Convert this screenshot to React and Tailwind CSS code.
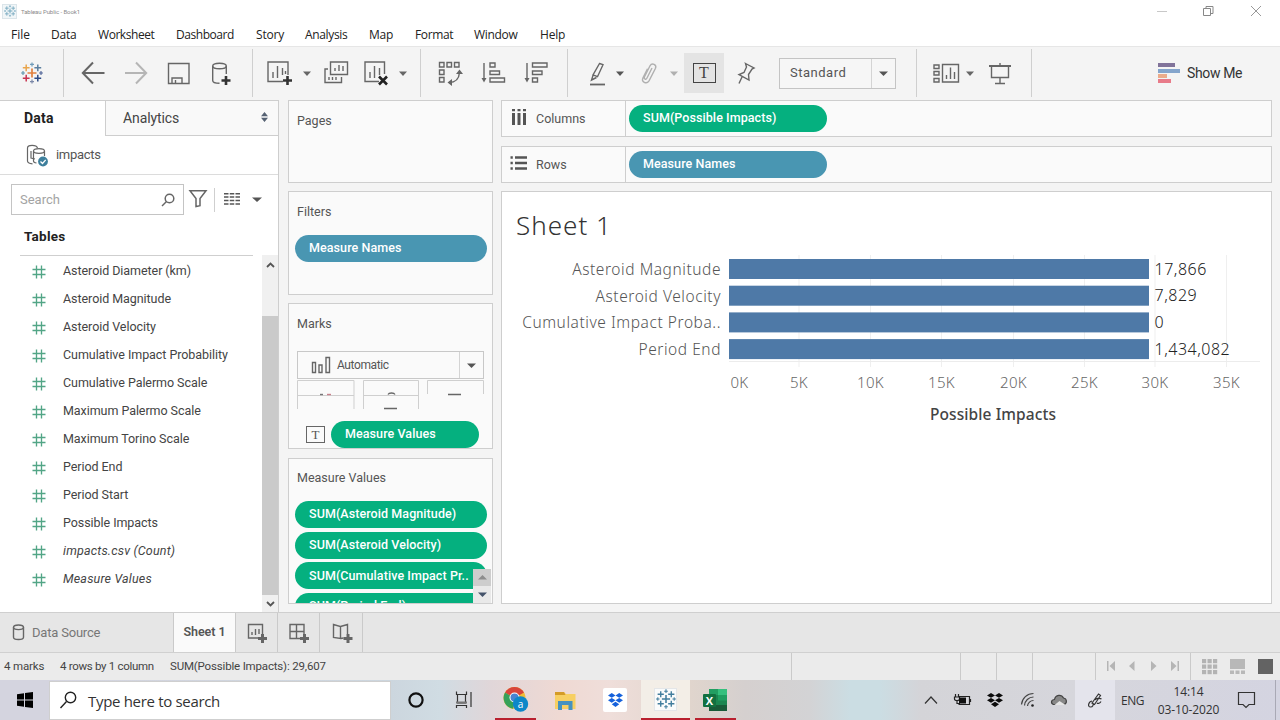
import React from "react";

/* Icon whose drawing coordinates start at (x, y). */
function Ico({ x, y, w, h, className = "", children, stroke = "#666", sw = 1.4 }) {
  return (
    <svg
      className={"block shrink-0 " + className}
      width={w}
      height={h}
      viewBox={`${x} ${y} ${w} ${h}`}
      fill="none"
      stroke={stroke}
      strokeWidth={sw}
    >
      {children}
    </svg>
  );
}

function Caret({ className = "", color = "#666", w = 8 }) {
  return (
    <svg className={"block shrink-0 " + className} width={w} height="5" viewBox="0 0 8 5" preserveAspectRatio="none">
      <path d="M0 .5h8L4 5z" fill={color} />
    </svg>
  );
}

function Plus({ x, y, s = 4.5, color = "#333", w = 2.6 }) {
  return <path d={`M${x - s} ${y}h${2 * s}M${x} ${y - s}v${2 * s}`} stroke={color} strokeWidth={w} />;
}

const CROSSES = [
  [0, 0, 4.5, "#e0803f", 1.7],
  [-5.8, -5.2, 3.4, "#e9a54c", 1.5],
  [5.8, -5.2, 3.4, "#5b7f9f", 1.5],
  [-5.8, 5.2, 3.4, "#c8334f", 1.5],
  [5.8, 5.2, 3.4, "#2a4a86", 1.5],
  [0, -8.6, 2, "#6f9cba", 1.2],
  [0, 8.6, 2, "#7b88a8", 1.2],
  [-9, 0, 1.9, "#5a93ab", 1.1],
  [9, 0, 1.9, "#4a5f95", 1.1],
];

function TableauMark({ size, color, className = "" }) {
  return (
    <svg className={"block shrink-0 " + className} width={size} height={size} viewBox="-11 -11 22 22">
      {CROSSES.map(([x, y, s, c, w], i) => (
        <path key={i} d={`M${x - s} ${y}h${2 * s}M${x} ${y - s}v${2 * s}`} stroke={color || c} strokeWidth={w} />
      ))}
    </svg>
  );
}

function Dropbox({ className = "", color, w, h }) {
  return (
    <svg className={"block shrink-0 " + className} width={w} height={h} viewBox="0 0 16 15" preserveAspectRatio="none" fill={color}>
      <path d="M4 0l4 2.6L4 5.2 0 2.6zM12 0l4 2.6-4 2.6-4-2.6zM4 5.3l4 2.6-4 2.6-4-2.6zM12 5.3l4 2.6-4 2.6-4-2.6zM8 9.3l4 2.7L8 15l-4-3z" />
    </svg>
  );
}

const Sep = () => <div className="h-[48px] w-px shrink-0 bg-[#cfcfcf]" />;

function Header() {
  return (
    <>
      <div className="flex h-[22px] items-center bg-white">
        <div className="ml-[2px] flex h-[15px] w-[15px] items-center justify-center border border-[#dbe5ea] bg-[#f1f6f8]">
          <TableauMark size={12} color="#6fa5bd" />
        </div>
        <span className="ml-[4px] pt-[2px] text-[6px] leading-none tracking-[-0.08px] text-[#8b8b8b]">Tableau Public - Book1</span>
        <Ico x={1156} y={4} w={12} h={14} className="ml-auto" stroke="#c8c8c8" sw={1}>
          <path d="M1157 11.5h10" />
        </Ico>
        <Ico x={1202} y={4} w={13} h={14} className="ml-[34px]" stroke="#888" sw={1}>
          <path d="M1203.5 8.5h7v7h-7zM1206 8V6.500h7v7h-2" />
        </Ico>
        <Ico x={1250} y={4} w={12} h={14} className="mr-[18px] ml-[35px]" stroke="#999" sw={1}>
          <path d="M1251 6l10 10M1261 6l-10 10" />
        </Ico>
      </div>
      <div className="flex h-[24px] items-center bg-white pt-[2px] pl-[11px] font-['Open_Sans','Noto_Sans',sans-serif] text-[12px] leading-none text-[#222]">
        <span className="w-[40px]">File</span>
        <span className="w-[47px] tracking-[-0.2px]">Data</span>
        <span className="w-[78px] tracking-[-0.45px]">Worksheet</span>
        <span className="w-[80px] tracking-[-0.45px]">Dashboard</span>
        <span className="w-[49px] tracking-[-0.2px]">Story</span>
        <span className="w-[64px] tracking-[-0.35px]">Analysis</span>
        <span className="w-[46px] tracking-[-0.2px]">Map</span>
        <span className="w-[59px] tracking-[-0.35px]">Format</span>
        <span className="w-[66px] tracking-[-0.3px]">Window</span>
        <span className="tracking-[-0.2px]">Help</span>
      </div>
    </>
  );
}

function Toolbar() {
  return (
    <div className="flex h-[54px] items-center border-t border-[#e6e6e6] bg-[#f4f4f4] pb-[1px]">
      <div className="flex w-[63px] shrink-0 justify-center pl-[1px]">
        <TableauMark size={22} />
      </div>
      <Sep />
      <div className="flex w-[188px] shrink-0 items-center">
        <Ico x={81} y={61.5} w={24} h={24} className="ml-[17px]" sw={2}>
          <path d="M104.500 73.500H83M93 63L82.800 73.500 93 84" />
        </Ico>
        <Ico x={124} y={61.5} w={24} h={24} className="ml-[19px]" stroke="#b5b5b5" sw={2}>
          <path d="M125 73.500h21.500M136 63l10.200 10.500L136 84" />
        </Ico>
        <Ico x={167} y={61} w={24} h={24} className="ml-[19px]">
          <path d="M168.500 63.500h20.500v20h-20.500zM172 83v-5h10v5M175.500 80v3" />
        </Ico>
        <Ico x={209} y={59} w={24} h={28} className="ml-[18px]">
          <ellipse cx="219.500" cy="66" rx="6.800" ry="2.800" />
          <path d="M212.700 66v14.500c0 1.800 3 2.800 6.800 2.800M226.300 66v8" />
          <Plus x={226} y={80.500} />
        </Ico>
      </div>
      <Sep />
      <div className="flex w-[167px] shrink-0 items-center">
        <Ico x={265} y={59} w={28} h={28} className="ml-[12px]">
          <path d="M288 75V62h-20v19.500h15M273 78v-6M277.500 78V66M282.500 75v-7M285.500 74v-3" />
          <Plus x={287.500} y={80.500} />
        </Ico>
        <Caret className="ml-[10px]" />
        <Ico x={323} y={59} w={26} h={28} className="ml-[12px]">
          <path d="M330.500 62h17v12.500h-17zM335 71v-3M339 71v-6M343 71v-5M328 69h-3v13.500h16.500V77M329 80v-3M332.500 80v-3M336 80v-3" />
        </Ico>
        <Ico x={362} y={59} w={28} h={28} className="ml-[13px]">
          <path d="M384.500 74V62h-19.500v19.500h14M370 78v-6M374.500 78V66M379.500 75v-7" />
          <path d="M379 76.500l8 8M387 76.500l-8 8" stroke="#222" strokeWidth="2.600" />
        </Ico>
        <Caret className="ml-[9px]" />
      </div>
      <Sep />
      <div className="flex w-[146px] shrink-0 items-center">
        <Ico x={437} y={60} w={27} h={27} className="ml-[16px]">
          <path d="M439.500 62.500h4.500v4.500h-4.500zM447 62.500h4.500v4.500H447zM454.500 62.500h4.500v4.500h-4.500zM439.500 70h4.500v4.500h-4.500zM439.500 77.500h4.500v4.500h-4.500zM449 82.500c6 0 10-3.500 10.500-10" />
          <path d="M452 79v7l-4.500-3.500zM456 74h7l-3.500-4.500z" fill="#666" stroke="none" />
        </Ico>
        <Ico x={481} y={60} w={26} h={27} className="ml-[17px]">
          <path d="M484 63v16M490 63h5v4h-5zM490 71h9.500v3.500H490zM490 78h14.500v4H490z" />
          <path d="M481.500 78h5l-2.500 4.500z" fill="#666" stroke="none" />
        </Ico>
        <Ico x={524} y={60} w={26} h={27} className="ml-[17px]">
          <path d="M527 63v16M532.500 63h14.500v4h-14.500zM532.500 71h9.500v3.500h-9.500zM532.500 78h5v4h-5z" />
          <path d="M524.500 78h5l-2.500 4.500z" fill="#666" stroke="none" />
        </Ico>
      </div>
      <Sep />
      <div className="flex w-[348px] shrink-0 items-center">
        <Ico x={588} y={60} w={20} h={27} className="ml-[20px]">
          <path d="M599.500 63.500l3.500 1.200-5.500 12-4.500-1.700zM593 75.500l-1.500 4.500 5-2.500" />
          <path d="M590 84.500h15" strokeWidth="1.800" />
        </Ico>
        <Caret className="ml-[8px]" color="#555" />
        <Ico x={638} y={60} w={22} h={27} className="ml-[14px]" stroke="#b0b0b0">
          <path d="M652 68l-5 10c-1 2.200-3.500 1-2.500-1.200l5.500-11c2-3.500 7-1.300 5.500 2.500l-6.500 12.500c-2.500 4-8 1.200-6-3l4.500-9" />
        </Ico>
        <Caret className="ml-[10px]" color="#b0b0b0" />
        <div className="ml-[6px] flex h-[40px] w-[40px] shrink-0 items-center justify-center bg-[#e4e4e4]">
          <div className="flex h-[20px] w-[23px] items-center justify-center border-[1.500px] border-[#444] font-['Liberation_Serif',serif] text-[16px] leading-none text-[#444]">
            T
          </div>
        </div>
        <Ico x={736} y={60} w={20} h={27} className="ml-[12px]">
          <path d="M745.500 63.500l8.500 4.500-2 1-3.500 5.500.5 5.500-10-5.500 5-2 2.500-5.500zM742 77l-3 6.500" />
        </Ico>
        <div className="ml-[23px] flex h-[31px] w-[117px] items-center border border-[#c4c4c4] bg-[#f6f6f6]">
          <span className="w-[91px] pl-[10px] text-[13px] tracking-[0.5px] text-[#555]">Standard</span>
          <span className="flex h-full flex-1 items-center justify-center border-l border-[#d4d4d4]">
            <Caret w={9} color="#555" />
          </span>
        </div>
      </div>
      <Sep />
      <div className="flex w-[114px] shrink-0 items-center">
        <Ico x={932} y={60} w={28} h={27} className="ml-[15px]">
          <path d="M934 65h5v3.500h-5zM934 71.500h5V75h-5zM934 78.500h5V82h-5zM942.500 64.500h16v17.500h-16zM946.500 79v-4M950.500 79V67.500M954.500 79v-7" />
        </Ico>
        <Caret className="ml-[6px]" />
        <Ico x={988} y={60} w={24} h={27} className="ml-[14px]">
          <path d="M989 66h22" strokeWidth="2" />
          <path d="M991.500 66v11.500h17V66M1000 77.500V83M995 83.500h10M1000 63v3" />
        </Ico>
      </div>
      <Sep />
      <Ico x={1158} y={62} w={23} h={22} className="ml-[126px]" stroke="none">
        <path d="M1158 63h17v4h-17z" fill="#81739a" />
        <path d="M1158 69h22v4h-22z" fill="#85a5cc" />
        <path d="M1158 74h9v4h-9z" fill="#ecac8b" />
        <path d="M1158 79h13v4h-13z" fill="#e87b89" />
      </Ico>
      <span className="ml-[6px] text-[14px] tracking-[-0.35px] whitespace-nowrap text-[#333]">Show Me</span>
    </div>
  );
}

const FIELDS = [
  "Asteroid Diameter (km)",
  "Asteroid Magnitude",
  "Asteroid Velocity",
  "Cumulative Impact Probability",
  "Cumulative Palermo Scale",
  "Maximum Palermo Scale",
  "Maximum Torino Scale",
  "Period End",
  "Period Start",
  "Possible Impacts",
  "impacts.csv (Count)",
  "Measure Values",
];

function DataPane() {
  return (
    <div className="flex w-[279px] shrink-0 flex-col border-t border-r border-[#cecece] bg-white">
      <div className="flex h-[35px] shrink-0">
        <div className="w-[105px] pt-[7px] pl-[24px] text-[14px] leading-[20px] font-bold tracking-[0.2px] text-[#222]">Data</div>
        <div className="flex flex-1 justify-between border-b border-l border-[#cecece] bg-[#f9f9f9] pr-[9px] pl-[17px]">
          <span className="pt-[7px] text-[14px] leading-[20px] tracking-[-0.1px] text-[#444]">Analytics</span>
          <Ico x={0} y={0} w={9} h={10} className="mt-[11px]" stroke="none">
            <path d="M1 4.200L4.500 0 8 4.200zM1 5.800L4.500 10 8 5.800z" fill="#566273" />
          </Ico>
        </div>
      </div>
      <div className="flex h-[39px] shrink-0 items-center border-b border-[#dcdcdc] pl-[26px]">
        <Ico x={26} y={143} w={23} h={23} sw={1.200}>
          <path d="M27.500 147v13c0 1.500 2 2.500 5 2.800M27.500 147c0-3.500 9-3.500 10 0M31 150v7l4 1" />
          <ellipse cx="39" cy="150" rx="5.500" ry="2.300" />
          <path d="M33.500 150v10c0 1.200 1 1.800 3 2M44.500 150v5" />
          <circle cx="43" cy="160.500" r="4.900" fill="#3d7f9c" stroke="none" />
          <path d="M40.500 160.500l2 2 3.200-3.600" stroke="#fff" strokeWidth="1.300" />
        </Ico>
        <span className="ml-[7px] text-[13px] tracking-[-0.3px] text-[#555]">impacts</span>
      </div>
      <div className="flex h-[49px] shrink-0 items-center pl-[11px]">
        <div className="flex h-[31px] w-[173px] items-center justify-between border border-[#c4c4c4] pr-[8px] pl-[8px]">
          <span className="text-[13px] text-[#a3a3a3]">Search</span>
          <Ico x={161} y={192} w={14} h={14} sw={1.500}>
            <circle cx="169.500" cy="197.500" r="4.300" />
            <path d="M166.500 200.500L162 205" />
          </Ico>
        </div>
        <Ico x={188} y={190} w={20} h={19} className="ml-[4px]" sw={1.500}>
          <path d="M190 190.800h16l-6 7.700v7.200l-4 .8v-8z" />
        </Ico>
        <div className="ml-[6px] h-[24px] w-px bg-[#cfcfcf]" />
        <Ico x={224} y={192} w={17} h={14} className="ml-[9px]" stroke="#555" sw={1.400}>
          <path d="M224 192.800h16M224 196h16M224 199.500h16M224 203h16" strokeDasharray="4.500 1.250" />
        </Ico>
        <Caret className="mb-[1px] ml-[11px]" w={10} color="#555" />
      </div>
      <div className="ml-[20px] flex h-[32px] w-[233px] shrink-0 items-center border-b border-[#cfcfcf] pb-[6px] pl-[4px] text-[13.500px] font-bold tracking-[0.25px] text-[#222]">
        Tables
      </div>
      <div className="-mt-px flex min-h-0 flex-1">
        <ul className="w-[262px] pt-[2px]">
          {FIELDS.map((f, i) => (
            <li key={f} className="flex h-[28px] items-center pl-[32px]">
              <Ico x={0} y={0} w={14} h={14} className="mt-[1px]" stroke="#52a586" sw={1.350}>
                <path d="M4.500.5v13M9.500.5v13M.5 4.500h13M.5 9.500h13" />
              </Ico>
              <span
                className={
                  i > 9
                    ? "ml-[17px] text-[12.500px] tracking-[0.18px] text-[#444] italic"
                    : "ml-[17px] text-[12.500px] tracking-[-0.06px] text-[#444]"
                }
              >
                {f}
              </span>
            </li>
          ))}
        </ul>
        <div className="flex flex-1 flex-col items-center bg-[#f0f0f0]">
          <Ico x={0} y={0} w={9} h={6} className="mt-[7px]" stroke="#555" sw={1.800}>
            <path d="M1 5l3.500-3.500L8 5" />
          </Ico>
          <div className="mt-[48px] h-[279px] w-full bg-[#cacaca]" />
          <Ico x={0} y={0} w={9} h={6} className="mt-[6px]" stroke="#555" sw={1.800}>
            <path d="M1 1l3.500 3.500L8 1" />
          </Ico>
        </div>
      </div>
    </div>
  );
}

function Pill({ children, className = "" }) {
  return (
    <div
      className={
        "flex h-[27px] shrink-0 items-center rounded-full pl-[14px] text-[12.500px] font-medium tracking-[0.08px] whitespace-nowrap text-white " +
        className
      }
    >
      {children}
    </div>
  );
}

function Cards() {
  return (
    <div className="ml-[9px] flex w-[205px] shrink-0 flex-col text-[12.500px] text-[#555]">
      <div className="h-[83px] border border-[#cecece] bg-[#fafafa] pt-[10px] pl-[8px] leading-[20px]">Pages</div>
      <div className="mt-[8px] h-[104px] border border-[#cecece] bg-[#fafafa] pt-[10px] pl-[6px]">
        <div className="pl-[2px] leading-[20px]">Filters</div>
        <Pill className="mt-[13px] w-[192px] bg-[#4996b2]">Measure Names</Pill>
      </div>
      <div className="mt-[8px] flex h-[146px] flex-col border border-[#cecece] bg-[#fafafa] pt-[10px] pl-[8px]">
        <div className="leading-[20px]">Marks</div>
        <div className="mt-[17px] flex h-[28px] w-[187px] shrink-0 items-center border border-[#c8c8c8] bg-[#fafafa]">
          <Ico x={311} y={355} w={20} h={18} className="ml-[13px]">
            <path d="M312.500 361.500h3v10h-3zM319 364h3v7.500h-3zM326 356.500h3.500v15H326z" />
          </Ico>
          <span className="ml-[6px] w-[122px] text-[12px] tracking-[-0.4px]">Automatic</span>
          <span className="flex h-full flex-1 items-center justify-center border-l border-[#d4d4d4]">
            <Caret w={9} color="#555" />
          </span>
        </div>
        <Ico x={297} y={380} w={188} h={30} className="mt-[1px]" stroke="#cfcfcf" sw={1}>
          <path d="M297.500 409v-28.500h56.500V409M297.500 395.500h56.500M363.500 409v-28.500h55V409M363.500 395.500h55M427.500 394v-13.500h56V394" />
          <path d="M320 394.500h3" stroke="#777" strokeWidth="1.400" />
          <path d="M327 394.500h4" stroke="#c9808b" strokeWidth="1.400" />
          <path d="M388 394.500c1-2 6-2 7 0M448 394.500h13M384 408.500h13" stroke="#666" strokeWidth="1.300" />
        </Ico>
        <div className="mt-[11px] flex items-center pl-[9px]">
          <div className="flex h-[17px] w-[19px] items-center justify-center border border-[#666] font-['Liberation_Serif',serif] text-[13px] leading-none text-[#555]">
            T
          </div>
          <Pill className="ml-[6px] w-[148px] bg-[#05b07f]">Measure Values</Pill>
        </div>
      </div>
      <div className="mt-[9px] flex h-[146px] border border-[#cecece] bg-[#fafafa]">
        <div className="flex w-full flex-col overflow-hidden pt-[9px] pl-[6px]">
          <div className="shrink-0 pl-[2px] leading-[20px]">Measure Values</div>
          <div className="relative mt-[13px] flex flex-col gap-[3.700px]">
            <Pill className="w-[192px] bg-[#05b07f]">SUM(Asteroid Magnitude)</Pill>
            <Pill className="w-[192px] bg-[#05b07f]">SUM(Asteroid Velocity)</Pill>
            <Pill className="w-[192px] bg-[#05b07f]">SUM(Cumulative Impact Pr..</Pill>
            <Pill className="w-[192px] bg-[#05b07f]">SUM(Period End)</Pill>
            <div className="absolute top-[68px] left-[178px] flex h-[34px] w-[18px] flex-col">
              <div className="flex h-[17px] items-center justify-center bg-[#cdcdcd]">
                <Caret w={9} className="rotate-180" color="#8d8d8d" />
              </div>
              <div className="flex h-[17px] items-center justify-center bg-[#e9e9e9]">
                <Caret w={9} color="#44536a" />
              </div>
            </div>
          </div>
        </div>
      </div>
    </div>
  );
}

const ROWS = [
  ["Asteroid Magnitude", "17,866"],
  ["Asteroid Velocity", "7,829"],
  ["Cumulative Impact Proba..", "0"],
  ["Period End", "1,434,082"],
];
const TICKS = [799, 870.5, 941.5, 1013.5, 1084.5, 1155, 1226.500];
const TICK_LABELS = ["5K", "10K", "15K", "20K", "25K", "30K", "35K"];

function Chart() {
  return (
    <div className="mt-[8px] h-[413px] border border-[#cecece] bg-white pt-[15px] font-['Noto_Sans',sans-serif]">
      <div className="pl-[14px] text-[26px] leading-[36px] font-light tracking-[1px] text-[#333]">Sheet 1</div>
      <div className="mt-[12px] flex">
        <div className="flex w-[219px] flex-col pt-[1px] text-right text-[15.500px] font-light text-[#555]">
          {ROWS.map(([name]) => (
            <div key={name} className="h-[26.700px] leading-[27px] tracking-[0.56px] whitespace-nowrap">
              {name}
            </div>
          ))}
        </div>
        <svg className="ml-[5px] block" width="545" height="145" viewBox="726 255 545 145">
          {TICKS.map((x) => (
            <path key={x} d={`M${x} 255v112`} stroke="#efefef" />
          ))}
          <path d="M729 361.500h531" stroke="#ececec" />
          {ROWS.map(([name, value], i) => (
            <g key={name}>
              <rect x="729" y={259 + i * 26.700} width="420" height="20" fill="#4e79a7" />
              <text x="1154.500" y={274.700 + i * 26.700} fontSize="16" className="font-light" letterSpacing="0.5" fill="#222">
                {value}
              </text>
            </g>
          ))}
          <g fontSize="15" className="font-light" fill="#666" letterSpacing="0.3">
            <text x="730.500" y="388">0K</text>
            {TICK_LABELS.map((t, i) => (
              <text key={t} x={TICKS[i]} y="388" textAnchor="middle">{t}</text>
            ))}
          </g>
        </svg>
      </div>
      <div className="mt-[2px] pl-[213px] text-center text-[15.500px] leading-[24px] font-medium tracking-[0.1px] text-[#444]">Possible Impacts</div>
    </div>
  );
}

function Shelf({ icon, label, children }) {
  return (
    <div className="flex h-[37px] items-center border border-[#cecece] bg-[#fafafa]">
      <div className="flex h-full w-[124px] items-center border-r border-[#cecece] pl-[7px] text-[12.500px] text-[#555]">
        {icon}
        <span className="ml-[8px] pt-[1px]">{label}</span>
      </div>
      {children}
    </div>
  );
}

function Sheet() {
  return (
    <div className="ml-[8px] flex w-[771px] shrink-0 flex-col">
      <Shelf
        label="Columns"
        icon={
          <Ico x={509} y={109} w={19} h={17} className="mb-[2px]" stroke="#555" sw={3}>
            <path d="M513.500 113v12M519 113v12M524.500 113v12M513.500 109v2.300M519 109v2.300M524.500 109v2.300" />
          </Ico>
        }
      >
        <Pill className="ml-[3px] w-[198px] bg-[#05b07f]">SUM(Possible Impacts)</Pill>
      </Shelf>
      <div className="h-[9px]" />
      <Shelf
        label="Rows"
        icon={
          <Ico x={509} y={155} w={19} h={17} className="mb-[2px]" stroke="#555" sw={2.400}>
            <path d="M515 157.500h12M515 163h12M515 168.500h12M510.500 157.500h2.300M510.500 163h2.300M510.500 168.500h2.300" />
          </Ico>
        }
      >
        <Pill className="ml-[3px] w-[198px] bg-[#4996b2]">Measure Names</Pill>
      </Shelf>
      <Chart />
    </div>
  );
}

function SheetTabs() {
  return (
    <div className="flex h-[40px] border-t border-[#cfcfcf] bg-[#e6e6e6]">
      <div className="flex w-[174px] items-center border-r border-[#cacaca] pl-[12px] text-[13px] text-[#777]">
        <Ico x={12} y={624} w={14} h={17} className="mb-[1px]">
          <ellipse cx="18.500" cy="627.300" rx="5" ry="2.300" />
          <path d="M13.500 627.300v10c0 3 10 3 10 0v-10" />
        </Ico>
        <span className="ml-[6px] tracking-[-0.2px]">Data Source</span>
      </div>
      <div className="flex w-[61px] justify-center bg-[#fafafa] pt-[9px] text-[12.500px] leading-[20px] font-semibold tracking-[-0.05px] text-[#555]">Sheet 1</div>
      <div className="flex w-[43px] items-center justify-center border-r border-l border-[#cacaca]">
        <Ico x={245} y={621} w={23} h={24}>
          <path d="M262.500 634v-9.500h-14v13.500h10M252 635v-3M255.500 635v-6M259 634v-5" />
          <Plus x={262.500} y={638.500} s={4.500} color="#666" w={3} />
        </Ico>
      </div>
      <div className="flex w-[42px] items-center justify-center border-r border-[#cacaca]">
        <Ico x={288} y={621} w={23} h={24}>
          <path d="M305 634v-9.500h-14v14h10M297.500 624.500v14M291 631.500h14" />
          <Plus x={305.500} y={638.500} s={4.500} color="#666" w={3} />
        </Ico>
      </div>
      <div className="flex w-[43px] items-center justify-center border-r border-[#cacaca]">
        <Ico x={330} y={621} w={23} h={24}>
          <path d="M340.500 626.500v12l-7-1v-13zM340.500 626.500l7-2v9.500M340.500 638.500l3-.5" />
          <Plus x={348} y={638.500} s={4.500} color="#666" w={3} />
        </Ico>
      </div>
    </div>
  );
}

function StatusBar() {
  return (
    <div className="flex h-[28px] items-center border-t border-[#d0d0d0] bg-[#ebebeb] text-[11.500px] whitespace-nowrap text-[#444]">
      <span className="w-[56px] pl-[4px] tracking-[-0.15px]">4 marks</span>
      <span className="ml-[4px] w-[110px] tracking-[-0.3px]">4 rows by 1 column</span>
      <span className="w-[621px] tracking-[-0.17px]">SUM(Possible Impacts): 29,607</span>
      <div className="h-full w-[169px] border-l border-[#cacaca]" />
      <div className="h-full w-[36px] border-l border-[#cacaca]" />
      <div className="h-full w-[36px] border-l border-[#cacaca]" />
      <div className="h-full w-[63px] border-l border-[#cacaca]" />
      <div className="flex h-full w-[95px] items-center border-l border-[#cacaca]">
        <Ico x={1106} y={660} w={75} h={13} className="ml-[10px]" stroke="none">
          <path d="M1107 661h1.500v10h-1.500zM1115 661v10l-5.500-5zM1134.500 661v10l-5.500-5zM1151 661v10l5.500-5zM1171 661v10l5.500-5zM1177.500 661h1.500v10h-1.500z" fill="#b5b5b5" />
        </Ico>
      </div>
      <div className="flex h-full flex-1 items-center border-l border-[#cacaca]">
        <Ico x={1201} y={658} w={73} h={17} className="ml-[10px]" stroke="none">
          {[0, 5.500, 11].map((dy) =>
            [0, 5.500, 11].map((dx) => <rect key={dx + "-" + dy} x={1202 + dx} y={659 + dy} width="4.200" height="4.200" fill="#b3b3b3" />)
          )}
          <rect x="1230" y="659" width="15" height="10" fill="#b8b8b8" />
          <path d="M1230 670.500h4v3.500h-4zM1235.500 670.500h4v3.500h-4zM1241 670.500h4v3.500h-4z" fill="#b8b8b8" />
          <rect x="1258" y="659" width="15" height="15" fill="#636363" />
        </Ico>
      </div>
    </div>
  );
}

function TaskBar() {
  return (
    <div className="flex h-[40px] items-center bg-[linear-gradient(90deg,#d4d4df_0,#d4d4df_49px,#ccd6de_391px,#d0dce3_440px,#e0d6d9_490px,#efd9d3_560px,#efdeda_610px,#e0d5cd_690px,#d5d0cf_745px,#d3d3d5_810px,#cbdde3_850px,#cbdde3_880px,#d4d4d8_920px,#d6d6dc_1075px,#d4d4e1_1280px)] font-['Open_Sans','Noto_Sans',sans-serif]">
      <div className="flex h-full w-[49px] shrink-0 items-center justify-center">
        <Ico x={0} y={0} w={16} h={16} stroke="none">
          <path d="M0 2.300l7-1v6.300H0zM8 1.100L16 0v7.600H8zM0 8.400h7v6.300l-7-1zM8 8.400h8V16l-8-1.100z" fill="#000" />
        </Ico>
      </div>
      <div className="flex h-[39px] w-[342px] shrink-0 items-center border border-[#cfcfcf] bg-white pl-[10px]">
        <Ico x={60} y={691} w={17} h={18} stroke="#222" sw={1.400}>
          <circle cx="70.500" cy="697.500" r="5.200" />
          <path d="M66.500 701.500L60.500 708" />
        </Ico>
        <span className="ml-[11px] pt-[2px] text-[15px] tracking-[-0.32px] text-[#333]">Type here to search</span>
      </div>
      <div className="flex h-full w-[104px] shrink-0 items-center">
        <Ico x={407} y={691} w={18} h={18} className="ml-[16px]" stroke="#111" sw={2.200}>
          <circle cx="416" cy="700" r="6.600" />
        </Ico>
        <Ico x={455} y={690} w={18} h={20} className="ml-[30px]" stroke="#333" sw={1.200}>
          <path d="M456.500 691.500v3h10v-3M456.500 708v-2.500h10v2.500M457.500 695v8h8v-8M471 692v15" />
          <path d="M456 702.500h11M471 696v4" strokeWidth="2" stroke="#777" />
        </Ico>
      </div>
      <div className="flex h-full w-[41px] shrink-0 items-center justify-center border-b-2 border-[#b9202f]">
        <Ico x={503} y={687} w={28} h={28} stroke="none">
          <circle cx="515.500" cy="700" r="11" fill="#f0bd35" />
          <path d="M515.500 700L506 694.500a11 11 0 0119 0z" fill="#d8443b" />
          <path d="M515.500 700L506 694.500a11 11 0 008 16.300z" fill="#35a15a" />
          <circle cx="515.500" cy="699.500" r="5" fill="#fff" />
          <circle cx="515.500" cy="699.500" r="4" fill="#4a83d0" />
          <circle cx="521.500" cy="706" r="7.700" fill="#0d87c8" />
          <text x="521.500" y="709.500" textAnchor="middle" fontSize="10" fill="#fff">a</text>
        </Ico>
      </div>
      <Ico x={554} y={689} w={23} h={21} className="ml-[18px]" stroke="none">
        <path d="M555 691h9l2 2h9.500v15H555z" fill="#f7cf63" />
        <path d="M555 691h9l1.500 3H555z" fill="#d49b27" />
        <path d="M558 709v-9h14.500v9h-4v-5H562v5z" fill="#4592c0" />
      </Ico>
      <div className="ml-[26px] flex h-[24px] w-[24px] shrink-0 items-center justify-center rounded-[2px] bg-white">
        <Dropbox w={15} h={14} color="#1561dc" />
      </div>
      <div className="ml-[14px] flex h-full w-[49px] shrink-0 items-center justify-center border-b-2 border-[#b9202f] bg-[#f3eee7]">
        <div className="flex h-[23px] w-[23px] items-center justify-center border border-[#e4e6e8] bg-[#fafbfb]">
          <TableauMark size={20} color="#417d9d" />
        </div>
      </div>
      <div className="ml-[5px] flex h-full w-[41px] shrink-0 items-center justify-center border-b-2 border-[#b9202f]">
        <Ico x={703} y={687} w={25} h={24} stroke="none">
          <path d="M709 689h18v22h-18z" fill="#1b8650" />
          <path d="M718 689h9v6h-9z" fill="#35c07d" />
          <path d="M709 689h9v6h-9z" fill="#229e62" />
          <path d="M718 695h9v5.500h-9z" fill="#1f9e60" />
          <path d="M709 705h18v6h-18z" fill="#185b38" />
          <rect x="703" y="694" width="13" height="13" rx="1" fill="#127040" />
          <text x="709.500" y="704.500" textAnchor="middle" fontSize="11" className="font-bold" fill="#fff">X</text>
        </Ico>
      </div>
      <div className="flex h-full w-[339px] shrink-0 items-center">
        <Ico x={924} y={695} w={14} h={10} className="ml-[188px]" stroke="#333" sw={1.200}>
          <path d="M925 703.500l6-6.500 6 6.500" />
        </Ico>
        <Ico x={953} y={692} w={20} h={16} className="ml-[15px]" stroke="#222" sw={1.200}>
          <path d="M958.500 696.500h11v8h-11M955.500 694v3M958.500 694v3M954.500 697h5v2c0 2-5 2-5 0zM957 700v3.500h3M970.500 699v3" />
          <path d="M959 697.500h7v6h-7z" fill="#111" stroke="none" />
        </Ico>
        <Dropbox className="ml-[14px]" w={16} h={14} color="#0b0b0b" />
        <Ico x={1020} y={693} w={16} h={16} className="ml-[17px]" stroke="#444" sw={1.200}>
          <path d="M1021.500 705.500a12 12 0 0112-11M1024.500 706.500a9 9 0 019-8.500M1027.500 707a6 6 0 016-5.500" />
          <circle cx="1032.500" cy="706.500" r="1.300" fill="#222" stroke="none" />
        </Ico>
        <Ico x={1050} y={693} w={18} h={14} className="ml-[14px]" stroke="#444" sw={1.200}>
          <path d="M1053.500 704.500c-3-1-2.500-5 1-5 1-5 7-5.500 9-1.500 3.500.5 4 5.500.5 6.500z" fill="#888" />
          <path d="M1054.500 705l5-4 6 4z" fill="#e6e6e6" stroke="none" />
        </Ico>
      </div>
      <div className="flex h-full w-[40px] shrink-0 items-center justify-center bg-[#e4e4ec]">
        <Ico x={1087} y={692} w={16} h={17} stroke="#333" sw={1.200}>
          <path d="M1092 703l6.500-9 2 1.500-6 9zM1092 701c-4 1-4.500 6-1.500 6 2.500 0 3-2 2.500-4M1095 700c1-2 5-2 6.500-1M1097 703c1 1 3 0 4-1.500" />
        </Ico>
      </div>
      <span className="ml-[6px] w-[33px] pt-[2px] text-[12px] tracking-[-0.5px] text-[#333]">ENG</span>
      <div className="flex w-[69px] shrink-0 flex-col items-center pt-[2px] text-[12px] leading-[18px] tracking-[-0.1px] whitespace-nowrap text-[#333]">
        <span>14:14</span>
        <span>03-10-2020</span>
      </div>
      <Ico x={1237} y={691} w={20} h={19} className="ml-[14px]" stroke="#333" sw={1.200}>
        <path d="M1238.500 692.500h16v12h-5.500l-3 3-3-3h-4.500z" />
      </Ico>
      <div className="ml-[18px] h-full w-px bg-[#a9a9b5]" />
    </div>
  );
}

export default function App() {
  return (
    <div className="flex h-[720px] w-[1280px] flex-col overflow-hidden bg-[#f4f4f4] font-['Roboto',sans-serif]">
      <Header />
      <Toolbar />
      <div className="flex h-[512px] shrink-0">
        <DataPane />
        <Cards />
        <Sheet />
      </div>
      <SheetTabs />
      <StatusBar />
      <TaskBar />
    </div>
  );
}
